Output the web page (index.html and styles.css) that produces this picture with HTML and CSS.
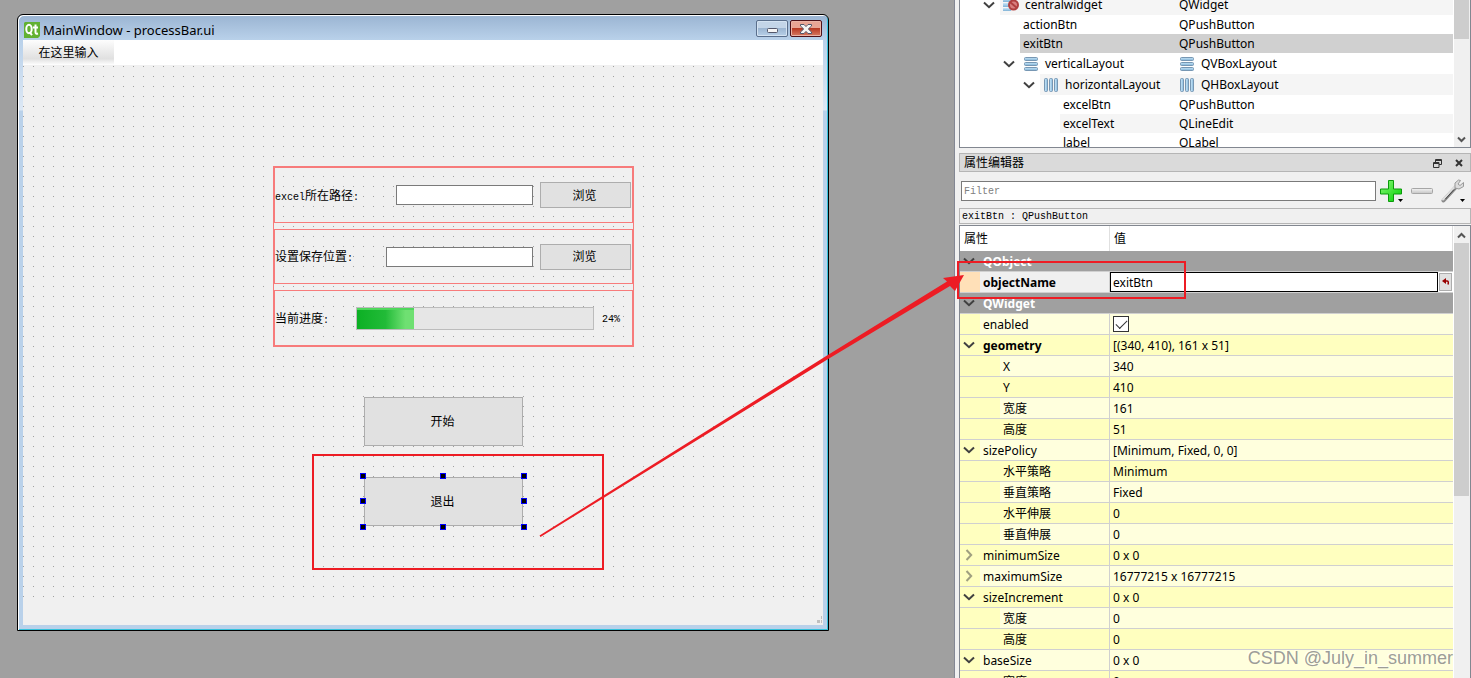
FILE: index.html
```html
<!DOCTYPE html>
<html lang="zh-CN">
<head>
<meta charset="utf-8">
<title>Qt Designer - processBar.ui</title>
<link rel="stylesheet" href="styles.css">
</head>
<body>
<svg class="defs" width="0" height="0" aria-hidden="true">
  <defs>
    <linearGradient id="bar" x1="0" y1="0" x2="0" y2="1"><stop offset="0" stop-color="#c9e6f8"/><stop offset="1" stop-color="#7fb2d6"/></linearGradient>
    <linearGradient id="barh" x1="0" y1="0" x2="1" y2="0"><stop offset="0" stop-color="#cfeafa"/><stop offset="1" stop-color="#86b8dc"/></linearGradient>
    <linearGradient id="green" x1="0" y1="0" x2="1" y2="1"><stop offset="0" stop-color="#8dfa7a"/><stop offset="1" stop-color="#00cf00"/></linearGradient>
    <linearGradient id="grey" x1="0" y1="0" x2="0" y2="1"><stop offset="0" stop-color="#f4f4f4"/><stop offset="1" stop-color="#c4c4c4"/></linearGradient>
    <symbol id="down" viewBox="0 0 12 8"><path d="M1 1.5 L6 6.2 L11 1.5" fill="none" stroke="#404040" stroke-width="2"/></symbol>
    <symbol id="right" viewBox="0 0 8 12"><path d="M1.5 1 L6.2 6 L1.5 11" fill="none" stroke="#a0a080" stroke-width="2"/></symbol>
    <symbol id="vbox" viewBox="0 0 14 14"><g fill="url(#bar)" stroke="#7797b3"><rect x=".5" y=".5" width="13" height="3" rx="1"/><rect x=".5" y="5.5" width="13" height="3" rx="1"/><rect x=".5" y="10.5" width="13" height="3" rx="1"/></g></symbol>
    <symbol id="hbox" viewBox="0 0 14 14"><g fill="url(#barh)" stroke="#7797b3"><rect x=".5" y=".5" width="3" height="13" rx="1"/><rect x="5.5" y=".5" width="3" height="13" rx="1"/><rect x="10.5" y=".5" width="3" height="13" rx="1"/></g></symbol>
  </defs>
</svg>

<main class="canvas">
  <section class="window">
    <header class="titlebar">
      <svg class="qt" width="16" height="16" viewBox="0 0 16 16"><path d="M1 0H16V14L14 16H0V1Z" fill="#62b132"/><g fill="none" stroke="#fff" stroke-width="2"><ellipse cx="5" cy="7" rx="2.7" ry="4.2"/><path d="M5.5 10 L8 13.2M11.5 2.5V10.3Q11.5 12.2 14 11.5M9 5.5H14"/></g></svg>
      <h1>MainWindow - processBar.ui</h1>
      <button class="winbtn" aria-label="最小化"><svg width="11" height="5" viewBox="0 0 11 5"><rect x=".5" y=".5" width="10" height="4" rx="1" fill="#f5f5f5" stroke="#53576b"/></svg></button>
      <button class="winbtn close" aria-label="关闭"><svg width="12" height="10" viewBox="0 0 12 10"><path d="M.5.5H4L6 2.6L8 .5H11.5V2L8.3 5L11.5 8V9.5H8L6 7.4L4 9.5H.5V8L3.7 5L.5 2Z" fill="#f4f4f4" stroke="#53576b"/></svg></button>
    </header>
    <nav class="menubar"><button class="menuitem">在这里输入</button></nav>
    <div class="form">
      <div class="vlayout">
        <div class="hlayout">
          <label for="excel"><span class="mono">excel</span>所在路径<span class="mono">:</span></label>
          <input id="excel" class="edit" type="text">
          <button class="push browse">浏览</button>
        </div>
        <div class="hlayout">
          <label for="save">设置保存位置<span class="mono">:</span></label>
          <input id="save" class="edit wide" type="text">
          <button class="push browse">浏览</button>
        </div>
        <div class="hlayout">
          <span class="caption">当前进度<span class="mono">:</span></span>
          <div class="progress" role="progressbar" aria-valuenow="24"><div class="fill" style="width:24%"></div></div>
          <span class="percent mono">24%</span>
        </div>
      </div>
      <button class="push action">开始</button>
      <div class="selected">
        <button class="push action">退出</button>
        <i class="h t l"></i><i class="h t c"></i><i class="h t r"></i>
        <i class="h m l"></i><i class="h m r"></i>
        <i class="h b l"></i><i class="h b c"></i><i class="h b r"></i>
      </div>
    </div>
    <footer class="statusbar"><svg width="5" height="7" viewBox="0 0 5 7" fill="#bfbfbf"><rect x="4" width="1" height="3"/><rect y="4" width="3" height="3"/><rect x="4" y="4" width="1" height="3"/></svg></footer>
  </section>
</main>

<aside class="dock">
  <section class="tree">
    <ul class="nodes">
      <li class="tall alt"><span class="indent i2"><svg width="12" height="8"><use href="#down"/></svg></span><span class="name icon first"><svg width="16" height="14" viewBox="0 0 16 14"><rect width="8" height="4" fill="url(#bar)"/><rect y="5" width="8" height="4" fill="url(#bar)"/><rect y="10" width="8" height="3" fill="url(#bar)"/><circle cx="10.5" cy="7" r="4.5" fill="#d98080" stroke="#b04040" stroke-width="2"/><path d="M7 4L14 10" stroke="#b04040" stroke-width="2"/></svg>centralwidget</span><span class="type">QWidget</span></li>
      <li><span class="indent i3"></span><span class="name">actionBtn</span><span class="type">QPushButton</span></li>
      <li class="current"><span class="indent i3"></span><span class="name">exitBtn</span><span class="type">QPushButton</span></li>
      <li class="tall"><span class="indent i3"><svg width="12" height="8"><use href="#down"/></svg></span><span class="name icon"><svg width="14" height="14"><use href="#vbox"/></svg>verticalLayout</span><span class="type icon"><svg width="14" height="14"><use href="#vbox"/></svg>QVBoxLayout</span></li>
      <li class="tall alt"><span class="indent i4"><svg width="12" height="8"><use href="#down"/></svg></span><span class="name icon"><svg width="14" height="14"><use href="#hbox"/></svg>horizontalLayout</span><span class="type icon"><svg width="14" height="14"><use href="#hbox"/></svg>QHBoxLayout</span></li>
      <li><span class="indent i5"></span><span class="name">excelBtn</span><span class="type">QPushButton</span></li>
      <li class="alt"><span class="indent i5"></span><span class="name">excelText</span><span class="type">QLineEdit</span></li>
      <li><span class="indent i5"></span><span class="name">label</span><span class="type">QLabel</span></li>
    </ul>
    <div class="scroll"><div class="thumb short"></div><svg width="9" height="7" viewBox="0 0 9 7"><path d="M1 1.5L4.5 5L8 1.5" fill="none" stroke="#555" stroke-width="2"/></svg></div>
  </section>

  <header class="docktitle">
    <h2>属性编辑器</h2>
    <button aria-label="浮动"><svg width="9" height="9" viewBox="0 0 9 9" fill="none" stroke="#333"><path d="M2.5 3V.5H8.5V5.5H6M2.5 1.5H8.5M.5 3.5H6V8.5H.5ZM.5 4.5H6"/></svg></button>
    <button aria-label="关闭面板"><svg width="8" height="8" viewBox="0 0 8 8"><path d="M1 1L7 7M7 1L1 7" stroke="#333" stroke-width="2"/></svg></button>
  </header>

  <div class="tools">
    <input class="filter" type="text" placeholder="Filter" aria-label="Filter">
    <button aria-label="添加"><svg width="24" height="24" viewBox="0 0 24 24"><path d="M9.5 1.5H14.5V10H22.5V15H14.5V22.5H9.5V15H1.5V10H9.5Z" fill="url(#green)" stroke="#0b9a0b"/><path d="M19 20H24L21.500 23Z" fill="#000"/></svg></button>
    <button aria-label="移除"><svg width="22" height="24" viewBox="0 0 22 24"><rect x=".5" y="9.500" width="21" height="5" rx="1" fill="url(#grey)" stroke="#a6a6a6"/></svg></button>
    <button aria-label="配置"><svg width="24" height="24" viewBox="0 0 24 24"><path d="M2.500 21.500L15 8" stroke="#8a8a8a" stroke-width="4" stroke-linecap="round"/><path d="M2 20.500L14.500 7" stroke="#dedede" stroke-width="2" stroke-linecap="round"/><path d="M4.500 20L13 10.500" stroke="#444"/><path d="M17.500 1L14 4L14 9L18 10L22.500 7.500V3.500L19 6.500L17 5L19.500 1.500Z" fill="#dcdcdc" stroke="#999"/><path d="M19 20H24L21.500 23Z" fill="#000"/></svg></button>
  </div>

  <div class="object mono">exitBtn : QPushButton</div>

  <section class="props">
    <table>
      <thead><tr><th>属性</th><th>值</th></tr></thead>
      <tbody>
        <tr class="group"><th colspan="2"><svg class="ch" width="12" height="8"><use href="#down"/></svg>QObject</th></tr>
        <tr class="edited"><th><label for="oname">objectName</label></th><td><div class="editor"><input id="oname" type="text" value="exitBtn"><button aria-label="重置"><svg width="8" height="8" viewBox="0 0 8 8"><path d="M3 3H5Q7 3 6 6.500" fill="none" stroke="#900" stroke-width="1.500"/><path d="M0 3L4 0V6Z" fill="#900"/></svg></button></div></td></tr>
        <tr class="group"><th colspan="2"><svg class="ch" width="12" height="8"><use href="#down"/></svg>QWidget</th></tr>
        <tr><th><label for="en">enabled</label></th><td class="boxed"><input id="en" class="check" type="checkbox" checked></td></tr>
        <tr class="dark bold"><th><svg class="ch" width="12" height="8"><use href="#down"/></svg>geometry</th><td>[(340, 410), 161 x 51]</td></tr>
        <tr class="sub"><th>X</th><td>340</td></tr>
        <tr class="sub dark"><th>Y</th><td>410</td></tr>
        <tr class="sub"><th>宽度</th><td>161</td></tr>
        <tr class="sub dark"><th>高度</th><td>51</td></tr>
        <tr><th><svg class="ch" width="12" height="8"><use href="#down"/></svg>sizePolicy</th><td>[Minimum, Fixed, 0, 0]</td></tr>
        <tr class="sub dark"><th>水平策略</th><td>Minimum</td></tr>
        <tr class="sub"><th>垂直策略</th><td>Fixed</td></tr>
        <tr class="sub dark"><th>水平伸展</th><td>0</td></tr>
        <tr class="sub"><th>垂直伸展</th><td>0</td></tr>
        <tr class="dark"><th><svg class="ch" width="12" height="12"><use href="#right"/></svg>minimumSize</th><td>0 x 0</td></tr>
        <tr><th><svg class="ch" width="12" height="12"><use href="#right"/></svg>maximumSize</th><td>16777215 x 16777215</td></tr>
        <tr class="dark"><th><svg class="ch" width="12" height="8"><use href="#down"/></svg>sizeIncrement</th><td>0 x 0</td></tr>
        <tr class="sub"><th>宽度</th><td>0</td></tr>
        <tr class="sub dark"><th>高度</th><td>0</td></tr>
        <tr><th><svg class="ch" width="12" height="8"><use href="#down"/></svg>baseSize</th><td>0 x 0</td></tr>
        <tr class="sub dark"><th>宽度</th><td>0</td></tr>
      </tbody>
    </table>
    <div class="scroll up"><svg width="9" height="7" viewBox="0 0 9 7"><path d="M1 5.500L4.500 2L8 5.500" fill="none" stroke="#555" stroke-width="2"/></svg><div class="thumb long"></div></div>
  </section>
</aside>

<div class="mark exit"></div>
<div class="mark prop"></div>
<svg class="arrow" width="1000" height="560" viewBox="0 0 1000 560"><path d="M539.500 535.500L827 355.500L947 281.500L943 278L964 275L955 291L950 286L829 358.500L540.500 537Z" fill="#ed1c24"/></svg>
<div class="watermark">CSDN @July_in_summer</div>
</body>
</html>
```
FILE: styles.css
```css
* { box-sizing: border-box; }
body {
  margin: 0;
  height: 100vh;
  display: flex;
  overflow: hidden;
  position: relative;
  background: #f0f0f0;
  color: #000;
  font: 12px/18px "Noto Sans", "Noto Sans CJK SC", sans-serif;
}
button, input { font: inherit; color: inherit; margin: 0; }
button { display: flex; align-items: center; justify-content: center; padding: 0; border: 0; background: none; }
input { border-radius: 0; outline: 0; }
svg { display: block; flex: none; }
h1, h2 { margin: 0; font-size: 12px; font-weight: 400; }
.defs { position: absolute; }
.mono { font-family: "Liberation Mono", monospace; font-size: 10px; }

/* Form canvas */
.canvas { flex: 1; display: flex; padding: 14px 125px 47px 17px; background: #a0a0a0; }
.window {
  flex: 1;
  display: flex;
  flex-direction: column;
  padding: 0 5px 5px;
  border: 1px solid #000;
  border-radius: 6px 6px 0 0;
  background: linear-gradient(#9ab4d2, #b9d1ea 25px, #dce8f5 95px, #b9d1ea 96px);
  box-shadow: inset 1px 1px #fff, inset -1px -1px #35c2dc;
}
.titlebar { display: flex; align-items: center; height: 25px; gap: 3px; padding: 4px 0 0 1px; }
.titlebar h1 { flex: 1; font-size: 13px; }
.winbtn { width: 32px; height: 17px; padding-top: 4px; border: 1px solid #5a6f8c; border-radius: 2px; background: linear-gradient(#c3d5e8 45%, #9cb6d2 50%, #b8d0e8); box-shadow: inset 0 0 0 1px #d4e3f2; margin-bottom: 2px; }
.winbtn.close { padding: 0; margin-right: 1px; margin-left: -1px; border-color: #4c1018; background: linear-gradient(#e9a595 45%, #b83a24 50%, #d77a62); box-shadow: inset 0 0 0 1px #eab3a6; }
.menubar { display: flex; height: 25px; background: #fff; }
.menuitem { width: 91px; background: linear-gradient(#fdfdfd, #e0e0e0 75%, #fff); }
.form {
  flex: 1;
  padding: 101px 0 0 250px;
  background:
    linear-gradient(90deg, transparent 1px, #f0f0f0 1px) 0 1px / 10px 10px,
    linear-gradient(#a0a0a0 1px, #f0f0f0 1px) 0 1px / 10px 10px;
}
.statusbar { display: flex; justify-content: flex-end; align-items: flex-end; height: 20px; padding: 2px 1px; background: #f0f0f0; }

.vlayout { display: flex; flex-direction: column; gap: 6px; width: 361px; border: 1px solid #f77b7b; }
.hlayout { display: flex; align-items: center; height: 56px; padding-right: 1px; border: 1px solid #f77b7b; }
.hlayout:nth-child(2) { height: 55px; }
.hlayout label, .caption { flex: 1; padding-top: 3px; }
.edit { width: 137px; height: 20px; margin-right: 7px; border: 1px solid #7a7a7a; background: #fff; }
.edit.wide { width: 147px; }
.push { padding-top: 1px; padding-right: 2px; border: 1px solid #adadad; background: #e1e1e1; }
.browse { width: 91px; height: 26px; }
.progress { width: 238px; height: 23px; border: 1px solid #bcbcbc; background: #e6e6e6; }
.fill { height: 100%; border-top: 2px solid #4fd75c; background: linear-gradient(90deg, #0cb024, #22bb38 50%, #6fe072 85%); }
.percent { width: 37px; padding: 3px 0 0 8px; }
.action { width: 159px; height: 49px; margin: 50px 0 0 91px; }
.selected { position: relative; width: 159px; margin: 31px 0 0 91px; }
.selected .action { margin: 0; }
.h { position: absolute; width: 6px; height: 6px; border: 1px solid #00f; background: #000; }
.t { top: -4px; } .m { top: 21px; } .b { bottom: -4px; }
.l { left: -4px; } .c { left: 76px; } .r { right: -4px; }

/* Docks */
.dock { display: flex; flex-direction: column; width: 517px; padding-left: 4px; border-left: 1px solid #838793; background: #f0f0f0; }
.tree { display: flex; height: 148px; border: 1px solid #828790; border-top: 0; background: #fff; overflow: hidden; }
.nodes { flex: 1; margin: -6px 1px 0 0; padding: 0; list-style: none; }
.nodes li { display: grid; grid-template-columns: auto 1fr 279px; height: 19px; }
.nodes li.tall { height: 21px; }
.indent { display: flex; align-items: center; justify-content: flex-end; padding-right: 5px; }
.i2 { width: 40px; } .i3 { width: 60px; } .i4 { width: 80px; } .i5 { width: 100px; }
.name, .type { display: flex; align-items: center; padding-left: 3px; white-space: nowrap; }
.type { padding-left: 5px; }
.icon { gap: 7px; padding-left: 4px; }
.icon.first { gap: 6px; padding-left: 3px; }
.type.icon { padding-left: 6px; }
.alt .name, .alt .type { background: #f5f5f5; }
.current .name, .current .type { background: #d0d0d0; }
.scroll { display: flex; flex-direction: column; align-items: center; justify-content: space-between; width: 16px; padding: 0 1px 4px 0; background: #f0f0f0; }
.thumb { width: 15px; background: #cdcdcd; }
.short { height: 39px; }
.long { height: 253px; }
.scroll.up { justify-content: flex-start; gap: 4px; padding-top: 6px; }

.docktitle { display: flex; align-items: center; gap: 13px; height: 19px; margin-top: 5px; padding: 1px 7px 0 4px; border: 1px solid #b5b5b5; background: #dadada; }
.docktitle h2 { flex: 1; }
.tools { display: flex; align-items: center; gap: 8px; height: 35px; padding: 2px 6px 0 2px; }
.filter { flex: 1; min-width: 0; height: 20px; padding: 2px 2px 0; border: 1px solid #7a7a7a; font: 10px "Liberation Mono", monospace; margin-right: -5px; }
.filter::placeholder { color: #808080; opacity: 1; }
.object { height: 16px; margin-top: 1px; padding: 1px 2px 0; border: 1px solid #b5b5b5; line-height: 14px; white-space: pre; }

.props { flex: 1; min-height: 0; display: flex; margin-top: 1px; border: 1px solid #828790; border-bottom: 0; background: #fff; overflow: hidden; }
table { flex: 1; align-self: flex-start; border-collapse: separate; border-spacing: 0; table-layout: fixed; margin-right: 1px; }
thead th { height: 25px; padding: 0 4px; border-right: 1px solid #e0e0e0; }
thead th:first-child { width: 150px; }
th { text-align: left; font-weight: 400; }
tbody th, tbody td { height: 21px; border-bottom: 1px solid #d0d0d0; background: #ffffdd; white-space: nowrap; }
tbody th { position: relative; padding: 2px 0 0 23px; border-right: 1px solid #d0d0d0; background: linear-gradient(90deg, #ffffbf 20px, #ffffdd 20px); }
tbody td { padding: 2px 0 0 3px; }
tbody td.boxed { padding-top: 0; }
.sub th { padding-left: 43px; background: linear-gradient(90deg, #ffffbf 40px, #ffffdd 40px); }
.dark th, .dark td { background: #ffffbf; }
.group th { background: #a0a0a0; color: #fff; font-weight: 700; border-right: 0; }
.bold th { font-weight: 700; }
.edited th { background: linear-gradient(90deg, #ffe0b8 20px, #f0f0f0 20px); font-weight: 700; }
.edited td { padding: 0; background: #fff; }
.ch { position: absolute; left: 3px; top: 50%; transform: translateY(-50%); }
.editor { display: flex; align-items: center; height: 20px; padding-right: 1px; gap: 1px; }
.editor input { flex: 1; min-width: 0; height: 20px; padding: 0 2px; border: 1px solid #000; background: #fff; }
.editor button { width: 13px; height: 18px; border: 1px solid #adadad; background: #e1e1e1; }
.check { appearance: none; width: 16px; height: 16px; border: 1px solid #333; background: #fff; display: grid; place-items: center; }
.check:checked::before { content: ""; width: 10px; height: 5px; margin-top: -3px; border: solid #333; border-width: 0 0 1px 1px; transform: rotate(-45deg); }

/* Annotations over the desktop */
.mark { position: absolute; border: 2px solid #ed1c24; pointer-events: none; }
.exit { left: 312px; top: 454px; width: 292px; height: 116px; }
.prop { left: 957px; top: 261px; width: 229px; height: 38px; }
.arrow { position: absolute; left: 0; top: 0; pointer-events: none; }
.watermark { position: absolute; right: 18px; bottom: 9px; color: rgba(130, 130, 130, .8); font: 18px/22px "Liberation Sans", sans-serif; text-shadow: -1px -1px rgba(255, 255, 255, .6); pointer-events: none; }
```
